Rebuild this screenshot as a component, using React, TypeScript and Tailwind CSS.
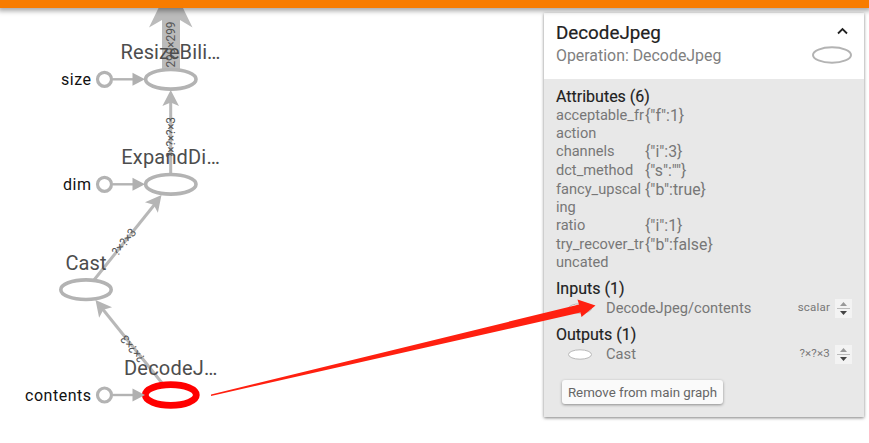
import type { ReactNode } from "react";

const FONT = 'font-[Roboto,"Noto_Sans",sans-serif]';

const attributes = [
  { name: "acceptable_fraction", value: '{"f":1}', h: "h-[36px]" },
  { name: "channels", value: '{"i":3}', h: "h-[19px]" },
  { name: "dct_method", value: '{"s":""}', h: "h-[19px]" },
  { name: "fancy_upscaling", value: '{"b":true}', h: "h-[36px]" },
  { name: "ratio", value: '{"i":1}', h: "h-[19px]" },
  { name: "try_recover_truncated", value: '{"b":false}', h: "h-[36px]" },
];

function OpNode({ x, y, label, lx, ly, w, selected }: { x: number; y: number; label: string; lx: number; ly: number; w: number; selected?: boolean }) {
  return (
    <g>
      <ellipse cx={x} cy={y} rx={selected ? 25.5 : 25.2} ry={selected ? 10.3 : 9.8} fill="#fff" stroke={selected ? "#f00" : "#b3b3b3"} strokeWidth={selected ? 6.8 : 3.6} />
      <text x={lx} y={ly} textLength={w} fontSize="20" fill="#4d4d4d">{label}</text>
    </g>
  );
}

function InputNode({ y, label, x, w }: { y: number; label: string; x: number; w: number }) {
  return (
    <g>
      <path d={`M113 ${y}H134`} stroke="#b3b3b3" strokeWidth="2.4" />
      <path d={`M132.500 ${y - 6.5}L145 ${y}L132.500 ${y + 6.5}Z`} fill="#b0b0b0" />
      <circle cx="104.500" cy={y} r="7" fill="#fff" stroke="#b3b3b3" strokeWidth="3.2" />
      <text x={x} y={y + 5.7} textLength={w} fontSize="16" fill="#111">{label}</text>
    </g>
  );
}

function Arrowhead({ x, y, angle }: { x: number; y: number; angle: number }) {
  return <path transform={`translate(${x} ${y}) rotate(${angle})`} d="M0 0L8.300 16L0 12.500L-8.300 16Z" fill="#b5b5b5" />;
}

function Graph() {
  return (
    <svg className="h-[435px] w-[544px] shrink-0" viewBox="0 8 544 435">
      <g stroke="#b8b8b8" strokeWidth="3" fill="none">
        <path d="M170.700 174V100" />
        <path d="M94 280L155 204" />
        <path d="M162 383L101 307" />
      </g>
      <path d="M158.500 8H183L192.500 27.500L180 20V69H162V20L149 27.500Z" fill="#bbb" />
      <Arrowhead x={170.700} y={90} angle={0} />
      <Arrowhead x={161.500} y={195} angle={39} />
      <Arrowhead x={95.500} y={300} angle={-39} />
      <g fontSize="12" fill="#555">
        <text transform="translate(175 67.500) rotate(-90)" textLength="46">299×299</text>
        <text transform="translate(175 158) rotate(-90)" textLength="41">?×?×?×3</text>
        <text transform="translate(117.500 256.500) rotate(-51)" textLength="31">?×?×3</text>
        <text transform="translate(145.500 358) rotate(-129)" textLength="31">?×?×3</text>
      </g>
      <OpNode x={170.800} y={79.300} label="ResizeBili…" lx={120.500} ly={59} w={100} />
      <OpNode x={170.800} y={184.300} label="ExpandDi…" lx={121.300} ly={164} w={98.500} />
      <OpNode x={86} y={289.700} label="Cast" lx={65.500} ly={270} w={41} />
      <OpNode x={170.800} y={395} label="DecodeJ…" lx={124} ly={375} w={93.500} selected />
      <InputNode y={79.300} label="size" x={61} w={30} />
      <InputNode y={184.300} label="dim" x={63} w={28} />
      <InputNode y={395} label="contents" x={25} w={66} />
    </svg>
  );
}

function Heading({ children }: { children: ReactNode }) {
  return <h3 className="h-[19px] text-[16px] leading-[19px] whitespace-nowrap text-[#212121] [-webkit-text-stroke:0.15px_#212121]">{children}</h3>;
}

function Stepper() {
  return (
    <svg className="ml-[5px] h-[19px] w-[17px] shrink-0 bg-[#f3f3f3]" viewBox="0 0 17 19">
      <path d="M5 7L8.500 3L12 7Z" fill="#999" />
      <path d="M2 9.500H15" stroke="#bbb" />
      <path d="M5 12L8.500 16L12 12Z" fill="#444" />
    </svg>
  );
}

function Connection({ name, shape }: { name: string; shape: string }) {
  return (
    <div className="flex h-5 items-end text-[#777]">
      <svg className="mb-[3px] ml-[11px] h-3 w-[26px] shrink-0" viewBox="0 0 26 12">
        <ellipse cx="13" cy="5.500" rx="11.500" ry="4.700" fill="#fff" stroke="#b8b8b8" />
      </svg>
      <span className="ml-[13px] flex-1 text-[14.700px] leading-[19px] whitespace-nowrap">{name}</span>
      <span className="text-[11.500px] leading-[21px] tracking-[0.2px]">{shape}</span>
      <Stepper />
    </div>
  );
}

export default function App() {
  return (
    <div className={`${FONT} relative flex h-[443px] w-[869px] flex-col overflow-hidden bg-white`}>
      <header className="z-10 h-2 shrink-0 bg-[#f77c00] shadow-[0_1px_5px_2px_rgba(0,0,0,0.35)]" />
      <main className="flex">
        <Graph />
        <aside className="mt-[5px] h-[404px] w-[320px] shrink-0 bg-[#e8e8e8] shadow-[0_1px_3px_rgba(0,0,0,0.5)]">
          <div className="flex h-[66px] justify-between bg-white pr-3 pl-3">
            <div className="pt-[9px]">
              <h2 className="text-[18.800px] leading-[22px] text-[#212121] [-webkit-text-stroke:0.2px_#212121]">DecodeJpeg</h2>
              <p className="text-[15.900px] leading-[23px] text-[#808080]">Operation: DecodeJpeg</p>
            </div>
            <div className="flex flex-col items-end pt-[14px]">
              <svg className="mr-1 h-2 w-3" viewBox="0 0 12 8"><path d="M2 6.500L6.500 2L11 6.500" fill="none" stroke="#222" strokeWidth="1.800" /></svg>
              <svg className="mt-[10px] h-[19px] w-10" viewBox="0 0 40 19"><ellipse cx="20" cy="10" rx="19" ry="7.700" fill="#fff" stroke="#b3b3b3" strokeWidth="2" /></svg>
            </div>
          </div>
          <div className="pt-2 pr-3 pl-3">
            <Heading>Attributes (6)</Heading>
            <div className="mb-2 text-[14.600px] leading-[18px] text-[#777]">
              {attributes.map((a) => (
                <div key={a.name} className={`flex ${a.h}`}>
                  <span className="mr-px w-[88px] shrink-0 [word-break:break-all]">{a.name}</span>
                  <span className="pt-px text-[15.800px]">{a.value}</span>
                </div>
              ))}
            </div>
            <Heading>Inputs (1)</Heading>
            <Connection name="DecodeJpeg/contents" shape="scalar" />
            <div className="mt-[7px]">
              <Heading>Outputs (1)</Heading>
              <Connection name="Cast" shape="?×?×3" />
            </div>
            <button className="mt-4 ml-[6px] block h-6 w-[161px] rounded-[3px] bg-[#fafafa] pt-px text-[13.300px] whitespace-nowrap text-[#666] shadow-[0_1px_3px_rgba(0,0,0,0.4)]">Remove from main graph</button>
          </div>
        </aside>
      </main>
      <svg className="pointer-events-none absolute inset-0 h-[443px] w-[869px]" viewBox="0 0 869 443">
        <path d="M211 394.500L579 304.500L577.500 299.500L595.500 305.500L581.500 317L580.500 312.500L211 396Z" fill="#ff2010" />
      </svg>
    </div>
  );
}
